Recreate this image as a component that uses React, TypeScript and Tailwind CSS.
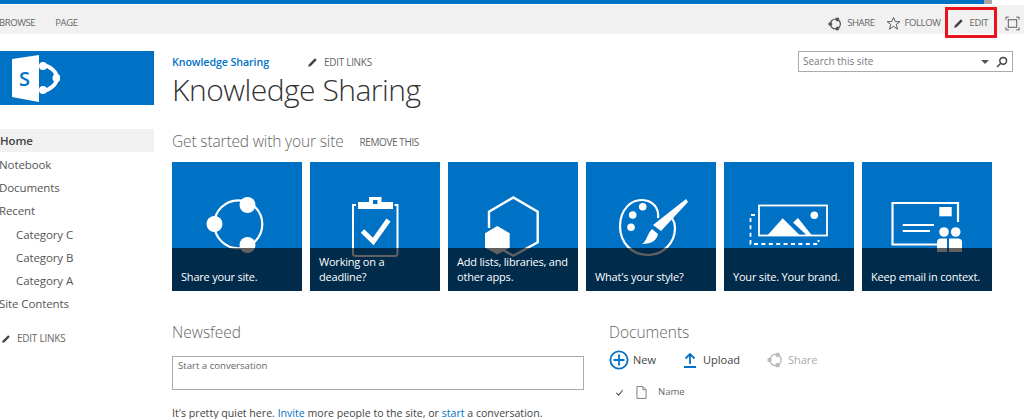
import type { ReactNode } from "react";

const font = { sans: "font-['Open_Sans',sans-serif]" };

function Pencil({ className = "" }: { className?: string }) {
  return (
    <svg viewBox="0 0 12 12" className={className} fill="#444">
      <path d="M8.6 1.4 10.6 3.4 4.2 9.8 1.2 10.8 2.2 7.8Z" />
    </svg>
  );
}

function ShareRing({ className = "", color = "#555" }: { className?: string; color?: string }) {
  return (
    <svg viewBox="0 0 14 14" className={className} fill={color} stroke={color}>
      <circle cx="7.4" cy="7" r="5" fill="none" strokeWidth="1.2" />
      <circle cx="9.3" cy="2.4" r="1.5" />
      <circle cx="2.3" cy="7" r="1.5" />
      <circle cx="9.3" cy="11.6" r="1.5" />
    </svg>
  );
}

function ShareIcon() {
  return (
    <g fill="#fff">
      <circle cx="66.3" cy="62.3" r="24" fill="none" stroke="#fff" strokeWidth="2.2" />
      <circle cx="75.5" cy="43" r="8" />
      <circle cx="42.5" cy="62" r="8" />
      <circle cx="75.5" cy="83" r="8" />
    </g>
  );
}

function ClipboardIcon() {
  return (
    <g>
      <path d="M46 43H43V91.5Q43 94 45.5 94H85Q87.5 94 87.5 91.5V43H84.5" fill="none" stroke="#fff" strokeWidth="2" />
      <path fillRule="evenodd" fill="#fff" d="M59 35H71.5V40H83V47H48V40H59ZM63 38V42H67.5V38Z" />
      <path d="M52.5 69 63.3 79.5 78.5 58" fill="none" stroke="#fff" strokeWidth="5" />
    </g>
  );
}

function AppsIcon() {
  return (
    <g>
      <path d="M41 66V49.7L65.3 35.5 89.7 49.7V80.3L65.3 93.7 55 88" fill="none" stroke="#fff" strokeWidth="2.4" />
      <path d="M49.3 64 61.7 71.3V85.7L49.3 92.5 37 85.7V71.3Z" fill="#fff" />
    </g>
  );
}

function PaletteIcon() {
  return (
    <g>
      <path
        d="M72 56C73 49 70 42 62 39 44 34 34 50 34 64 34 81 46 93 62 93 77 93 89 81 89 66 89 62 88 59 86 56"
        fill="none"
        stroke="#fff"
        strokeWidth="2.2"
      />
      <circle cx="56.7" cy="44.7" r="3.8" fill="#fff" />
      <circle cx="46.7" cy="53" r="3.8" fill="#fff" />
      <circle cx="45" cy="65.3" r="3.8" fill="#fff" />
      <path d="M100 37 102 40 75 69 67 63Z" fill="#fff" />
      <path d="M66 67 72 72C71 78 66 82 56 82 61 79 61 72 66 67Z" fill="#fff" />
    </g>
  );
}

function BrandIcon() {
  return (
    <g>
      <rect x="35" y="43.5" width="68" height="30" fill="none" stroke="#fff" strokeWidth="1.8" />
      <circle cx="90.3" cy="53.3" r="3.8" fill="#fff" />
      <path d="M43.3 73.5 58.7 56.3 76 73.5Z" fill="#fff" />
      <path d="M69 60.5 74 56 88 73.5H83Z" fill="#fff" />
      <path d="M31 53H26.5V82H94.5V78" fill="none" stroke="#fff" strokeWidth="1.8" strokeDasharray="4 3.4" />
    </g>
  );
}

function EmailIcon() {
  return (
    <g>
      <path d="M75 82.5H30.5V41H96V60" fill="none" stroke="#fff" strokeWidth="2.2" />
      <rect x="77.3" y="45" width="12.4" height="9.3" fill="#fff" />
      <rect x="40.7" y="62" width="31.3" height="2" fill="#fff" />
      <rect x="40.7" y="68" width="27.3" height="2" fill="#fff" />
      <circle cx="82" cy="70" r="4.8" fill="#fff" />
      <circle cx="93.7" cy="70" r="4.8" fill="#fff" />
      <path d="M75 90V80Q75 76.5 79 76.5H85V90Z" fill="#fff" />
      <path d="M87 90V76.5H96Q100 76.5 100 80V90Z" fill="#fff" />
    </g>
  );
}

const tiles: { icon: ReactNode; text: ReactNode }[] = [
  { icon: <ShareIcon />, text: "Share your site." },
  { icon: <ClipboardIcon />, text: <>Working on a<br />deadline?</> },
  { icon: <AppsIcon />, text: <>Add lists, libraries, and<br />other apps.</> },
  { icon: <PaletteIcon />, text: "What's your style?" },
  { icon: <BrandIcon />, text: "Your site. Your brand." },
  { icon: <EmailIcon />, text: "Keep email in context." },
];

const navItems = [
  { label: "Notebook", sub: false },
  { label: "Documents", sub: false },
  { label: "Recent", sub: false },
  { label: "Category C", sub: true },
  { label: "Category B", sub: true },
  { label: "Category A", sub: true },
  { label: "Site Contents", sub: false },
];

export default function App() {
  return (
    <div className={`relative h-[419px] w-[1024px] overflow-hidden bg-white text-[#444] ${font.sans}`}>
      {/* suite bar */}
      <div className="flex h-[4px] w-full">
        <div className="w-[984px] bg-[#0072c6]" />
        <div className="w-[8px] bg-[#a6a6a6]" />
      </div>
      {/* ribbon */}
      <div className="mt-px flex h-[29px] items-center justify-between bg-[#f1f1f1] pt-[8px] text-[9.5px] tracking-[-0.4px] text-[#666]">
        <div className="flex gap-[20px]">
          <span className="-ml-px">BROWSE</span>
          <span>PAGE</span>
        </div>
        <div className="flex items-center">
          <ShareRing className="h-[14px] w-[14px]" />
          <span className="ml-[5px]">SHARE</span>
          <svg viewBox="0 0 16 16" className="ml-[11px] h-[15px] w-[15px]" fill="none" stroke="#555" strokeWidth="1">
            <path d="M8 1.5 9.9 6H14.8L10.9 9.1 12.3 14 8 11.1 3.7 14 5.1 9.1 1.2 6H6.1Z" />
          </svg>
          <span className="ml-[4px]">FOLLOW</span>
          <Pencil className="ml-[12px] h-[11px] w-[11px]" />
          <span className="ml-[6px]">EDIT</span>
          <svg viewBox="0 0 16 16" className="ml-[17px] mr-[4px] h-[15px] w-[15px]" fill="none" stroke="#555" strokeWidth="1">
            <rect x="3.5" y="4" width="9" height="8" />
            <path d="M1 4V1.2H4M12 1.2H15V4M15 12V14.8H12M4 14.8H1V12" />
          </svg>
        </div>
      </div>
      {/* red annotation */}
      <div className="absolute left-[945px] top-[7px] h-[31px] w-[52px] border-[3px] border-[#e8131f]" />

      <div className="flex">
        {/* left column */}
        <aside className="w-[154px] shrink-0 pt-[17px]">
          <div className="flex h-[54px] items-center bg-[#0072c6] pl-[12px]">
            <svg viewBox="0 0 48 48" className="h-[48px] w-[48px]">
              <path d="M0 5 27 1V48L0 43Z" fill="#fff" />
              <text x="7" y="32" fontSize="20" fontWeight="600" fill="#0072c6" fontFamily="Open Sans, sans-serif">S</text>
              <path d="M31 11C38 12 45 18 45 24 45 30 38 36 31 37" fill="none" stroke="#fff" strokeWidth="4" />
              <circle cx="31" cy="12" r="4" fill="#fff" />
              <circle cx="44.5" cy="24" r="4" fill="#fff" />
              <circle cx="31" cy="36" r="4" fill="#fff" />
            </svg>
          </div>
          <nav className="mt-[24px] text-[11.5px] tracking-[-0.1px] text-[#555]">
            <div className="flex h-[23px] items-center bg-[#f1f1f1] font-semibold text-[#444]">Home</div>
            <div className="pt-px">
              {navItems.map((item) => (
                <div key={item.label} className={`flex h-[23.2px] items-center ${item.sub ? "pl-[16px]" : "-ml-px"}`}>
                  {item.label}
                </div>
              ))}
            </div>
            <div className="mt-[16px] flex items-center text-[10px] tracking-[-0.25px] text-[#666]">
              <Pencil className="ml-[1px] h-[10px] w-[10px]" />
              <span className="ml-[6px]">EDIT LINKS</span>
            </div>
          </nav>
        </aside>

        {/* main column */}
        <main className="pl-[18px]">
          <div className="flex items-center pt-[20px] text-[#0072c6]">
            <span className="w-[135px] text-[10.7px] font-semibold tracking-[-0.1px]">Knowledge Sharing</span>
            <Pencil className="h-[11px] w-[11px]" />
            <span className="ml-[6px] text-[10px] tracking-[-0.3px] text-[#666]">EDIT LINKS</span>
          </div>
          <h1 className="mt-px text-[30px] leading-[38px] font-light tracking-[-0.5px] text-[#333]">Knowledge Sharing</h1>
          <div className="mt-[21px] flex h-[24px] items-center">
            <h2 className="text-[15.5px] font-light tracking-[-0.15px] text-[#666]">Get started with your site</h2>
            <span className="ml-[16px] text-[10px] tracking-[-0.4px] text-[#666]">REMOVE THIS</span>
          </div>

          <div className="mt-[8px] flex gap-[8px]">
            {tiles.map((tile, i) => (
              <div key={i} className="relative h-[129px] w-[130px] overflow-hidden bg-[#0072c6]">
                <svg viewBox="0 0 130 129" className="h-[129px] w-[130px]">
                  {tile.icon}
                </svg>
                <div className="absolute inset-x-0 bottom-0 flex h-[43px] flex-col justify-end bg-black/[.62] px-[9px] pb-[7px] text-[11px] leading-[14.5px] tracking-[-0.2px] whitespace-nowrap text-white">
                  <span>{tile.text}</span>
                </div>
              </div>
            ))}
          </div>

          <div className="mt-[30px] flex">
            <section className="w-[412px]">
              <h2 className="text-[15.5px] leading-[22px] font-light text-[#666]">Newsfeed</h2>
              <div className="mt-[13px] h-[34px] border border-[#ababab] px-[5px] py-[2px] text-[9.6px] text-[#666]">
                Start a conversation
              </div>
              <p className="mt-[16px] text-[10.6px] whitespace-nowrap text-[#444]">
                It's pretty quiet here. <span className="text-[#0072c6]">Invite</span> more people to the site, or{" "}
                <span className="text-[#0072c6]">start</span> a conversation.
              </p>
            </section>

            <section className="ml-[25px]">
              <h2 className="text-[15.5px] leading-[22px] font-light text-[#666]">Documents</h2>
              <div className="mt-[7px] flex items-center text-[11px] leading-[20px]">
                <svg viewBox="0 0 20 20" className="h-[20px] w-[20px]" fill="none" stroke="#0072c6" strokeWidth="1.8">
                  <circle cx="10" cy="10" r="8.6" />
                  <path d="M10 4.5V15.5M4.5 10H15.5" />
                </svg>
                <span className="ml-[4px] text-[#444]">New</span>
                <svg viewBox="0 0 14 16" className="ml-[27px] h-[16px] w-[14px]" fill="none" stroke="#0072c6" strokeWidth="1.8">
                  <path d="M7 12V2M2.5 6.5 7 2 11.5 6.5M1 15H13" />
                </svg>
                <span className="ml-[6px] text-[#444]">Upload</span>
                <ShareRing className="ml-[27px] h-[16px] w-[16px]" color="#bbb" />
                <span className="ml-[5px] text-[#aaa]">Share</span>
              </div>
              <div className="mt-[15px] flex items-center text-[9.5px] text-[#666]">
                <svg viewBox="0 0 10 10" className="ml-[6px] h-[9px] w-[9px]" fill="none" stroke="#555" strokeWidth="1.3">
                  <path d="M1.5 5.5 4 8 8.5 2.5" />
                </svg>
                <svg viewBox="0 0 12 14" className="ml-[12px] h-[13px] w-[11px]" fill="none" stroke="#777" strokeWidth="1">
                  <path d="M1 .5H7.5L11 4V13.5H1ZM7.5 .5V4H11" />
                </svg>
                <span className="ml-[11px]">Name</span>
              </div>
            </section>
          </div>
        </main>
      </div>

      {/* search box */}
      <div className="absolute left-[798px] top-[51px] flex h-[21px] w-[215px] items-center border border-[#ababab] bg-white pl-[4px] text-[10px] text-[#777]">
        <span className="flex-1">Search this site</span>
        <span className="mr-[7px] h-0 w-0 border-x-[4px] border-t-[4px] border-x-transparent border-t-[#555]" />
        <svg viewBox="0 0 12 12" className="mr-[4px] h-[12px] w-[12px]" fill="none" stroke="#444" strokeWidth="1.5">
          <circle cx="7.2" cy="4.8" r="3.4" />
          <path d="M4.8 7.2 1 11" />
        </svg>
      </div>
    </div>
  );
}
